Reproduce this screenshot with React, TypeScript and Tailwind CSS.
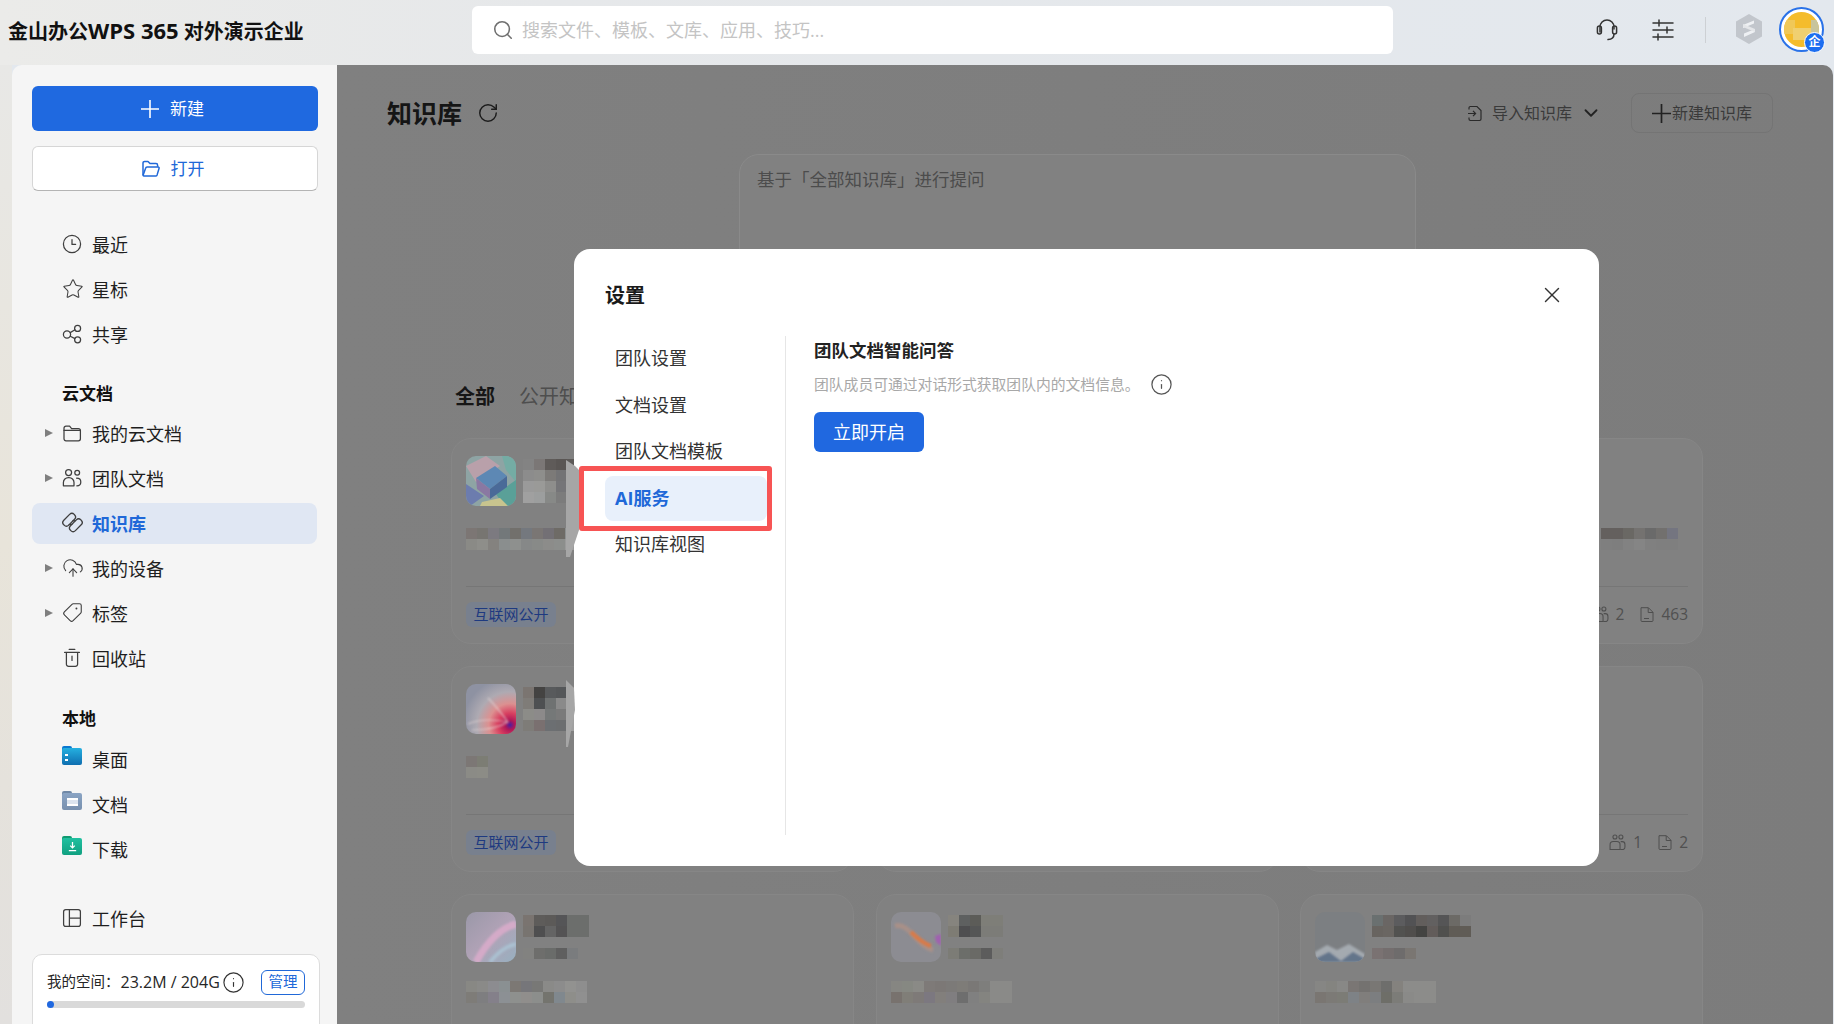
import React from 'react';
import { ChevronDown, CloudUpload, Info, RotateCw, Search, Star, Tag, X } from 'lucide-react';

const ink = '#3f3f3f';

const Ic: React.FC<{ children: React.ReactNode; className?: string; color?: string }> = ({ children, className = 'w-[20px] h-[20px]', color = ink }) => (
  <svg viewBox="0 0 20 20" fill="none" stroke={color} strokeWidth="1.25" strokeLinecap="round" strokeLinejoin="round" className={className}>
    {children}
  </svg>
);

const ClockIcon = () => (
  <Ic>
    <circle cx="10" cy="10" r="8.6" />
    <path d="M10 5.6V10.4H13.6" />
  </Ic>
);
const ShareIcon = () => (
  <Ic>
    <circle cx="5" cy="10.4" r="3.6" />
    <circle cx="15.6" cy="4.4" r="3" />
    <circle cx="15.6" cy="15.8" r="3" />
    <path d="M8.2 8.6L13 5.8M8.2 12.2L13 14.6" />
  </Ic>
);
const FolderIcon = () => (
  <Ic>
    <path d="M2 5.2a2 2 0 0 1 2-2h3.6l2 2.4h6.8a2 2 0 0 1 2 2v8.2a2 2 0 0 1-2 2H4a2 2 0 0 1-2-2V5.2Z" />
    <path d="M2 7.4H18" />
  </Ic>
);
const TeamIcon = () => (
  <Ic>
    <circle cx="6.6" cy="4.6" r="3" />
    <circle cx="15.2" cy="4.8" r="2.4" />
    <path d="M1.4 17.8v-3.2a5 5 0 0 1 5-5h.6a5 5 0 0 1 5 5v3.2Z" />
    <path d="M14.6 10.2c2.4 0 4.2 1.6 4.2 3.8 0 2.2-1.6 3.8-4 3.8" />
  </Ic>
);
const KnowledgeIcon = () => (
  <Ic className="w-[21px] h-[21px]">
    <g transform="rotate(-45 10 10)">
      <rect x="2.6" y="2.6" width="14" height="6.6" rx="3.1" />
      <rect x="3.4" y="10.8" width="14" height="6.6" rx="3.1" />
      <path d="M6.4 9.2L8.4 10.8M11.4 9.2L13.4 10.8" />
    </g>
  </Ic>
);
const TrashIcon = () => (
  <Ic>
    <path d="M2.6 4.4H17.4M7.2 1.4H12.8" />
    <path d="M4.4 4.6V16.2a2.2 2.2 0 0 0 2.2 2.2h6.8a2.2 2.2 0 0 0 2.2-2.2V4.6" />
    <path d="M10 8V12.4" />
  </Ic>
);
const BoardIcon = () => (
  <Ic>
    <rect x="1.6" y="1.6" width="16.8" height="16.8" rx="2.2" />
    <path d="M7.4 1.8V18.2M7.4 10H18.2" />
  </Ic>
);

const LocalFolder: React.FC<{ from: string; to: string; tab: string; children: React.ReactNode }> = ({ from, to, tab, children }) => (
  <span className="relative block w-[20px] h-[19px] -translate-y-[3px]">
    <span className="absolute left-0 top-0 w-[10px] h-[6px] rounded-t-[2px]" style={{ background: tab }} />
    <span className="absolute left-0 right-0 top-[2px] bottom-0 rounded-[2px] flex items-center justify-center" style={{ background: `linear-gradient(180deg, ${from}, ${to})` }}>
      {children}
    </span>
  </span>
);

const Arrow = () => <span className="w-0 h-0 border-y-[4.5px] border-y-transparent border-l-[8px] border-l-[#7f7f7f] -translate-y-[1px]" />;

const NavRow: React.FC<{ icon: React.ReactNode; label: string; arrow?: boolean; active?: boolean }> = ({ icon, label, arrow, active }) => (
  <div className="h-[45px] flex items-center">
    <div className={`w-[285px] h-[41px] flex items-center rounded-[8px] pl-[13px] ${active ? 'bg-[#e0e7f3]' : ''}`}>
      <span className="w-[17px] flex items-center">{arrow && <Arrow />}</span>
      <span className="w-[30px] flex items-center -translate-y-[1px]">{icon}</span>
      <span className={`text-[18px] leading-[24px] ${active ? 'font-bold text-[#2068d8]' : 'text-[#1e1e1e]'}`}>{label}</span>
    </div>
  </div>
);

const Heading: React.FC<{ label: string; className?: string }> = ({ label, className = '' }) => (
  <div className={`h-[38px] flex items-center pl-[30px] text-[17px] font-bold text-[#111] ${className}`}>{label}</div>
);

const PlusMark: React.FC<{ color: string; size: number }> = ({ color, size }) => (
  <svg viewBox="0 0 18 18" fill="none" stroke={color} strokeWidth="1.6" className="shrink-0" style={{ width: size, height: size }}>
    <path d="M9 0V18M0 9H18" />
  </svg>
);

const Sidebar = () => (
  <aside className="w-[325px] shrink-0 bg-[#f5f5f5] rounded-tl-[10px] pl-[20px] pt-[21px] overflow-hidden">
    <button className="w-[286px] h-[45px] rounded-[6px] bg-[#1f69e0] text-white flex items-center justify-center gap-[11px] pr-[5px] text-[17px]">
      <PlusMark color="#fff" size={18} />
      新建
    </button>
    <button className="w-[286px] h-[45px] mt-[15px] rounded-[6px] bg-white border border-[#d6d6d6] border-b-[#b4b4b4] text-[#2068d8] flex items-center justify-center gap-[10px] pr-[5px] text-[17px]">
      <svg viewBox="0 0 20 20" fill="none" stroke="#2068d8" strokeWidth="1.5" strokeLinejoin="round" className="w-[20px] h-[20px]">
        <path d="M2 16V4a1.6 1.6 0 0 1 1.6-1.6H7L9 4.6h6a1.6 1.6 0 0 1 1.6 1.6v1.6" />
        <path d="M2 16.4l2.6-7.2a1.6 1.6 0 0 1 1.5-1.2h11a1 1 0 0 1 1 1.3l-2 6.6a1.6 1.6 0 0 1-1.5 1.1H3.2A1.2 1.2 0 0 1 2 16.4Z" />
      </svg>
      打开
    </button>

    <div className="mt-[31px]">
      <NavRow icon={<ClockIcon />} label="最近" />
      <NavRow icon={<Star size={22} strokeWidth={1.15} color={ink} />} label="星标" />
      <NavRow icon={<ShareIcon />} label="共享" />
    </div>

    <Heading label="云文档" className="mt-[16px] pt-[3px]" />
    <NavRow arrow icon={<FolderIcon />} label="我的云文档" />
    <NavRow arrow icon={<TeamIcon />} label="团队文档" />
    <NavRow active icon={<KnowledgeIcon />} label="知识库" />
    <NavRow arrow icon={<CloudUpload size={22} strokeWidth={1.2} color={ink} />} label="我的设备" />
    <NavRow arrow icon={<Tag size={21} strokeWidth={1.25} color={ink} className="rotate-90" />} label="标签" />
    <NavRow icon={<TrashIcon />} label="回收站" />

    <Heading label="本地" className="mt-[18px] pt-[2px]" />
    <NavRow
      icon={
        <LocalFolder from="#25b0e0" to="#0f6eb0" tab="#0a78d0">
          <span className="absolute left-[3px] top-[6px] w-[3px] h-[7px] border-y-[2.5px] border-white" />
        </LocalFolder>
      }
      label="桌面"
    />
    <NavRow
      icon={
        <LocalFolder from="#8aa4c4" to="#7890ae" tab="#6f88a6">
          <span className="w-[11px] h-[8px] border-y-[2px] border-white bg-[#dce4ee]" />
        </LocalFolder>
      }
      label="文档"
    />
    <NavRow
      icon={
        <LocalFolder from="#20c0a0" to="#10a080" tab="#0f9a70">
          <svg viewBox="0 0 12 12" className="w-[11px] h-[11px]" fill="none" stroke="#fff" strokeWidth="1.4">
            <path d="M6 1V7M3.5 5L6 7.5 8.5 5M2 10.5H10" />
          </svg>
        </LocalFolder>
      }
      label="下载"
    />
    <div className="mt-[24px]">
      <NavRow icon={<BoardIcon />} label="工作台" />
    </div>

    <div className="w-[288px] h-[120px] mt-[13px] rounded-t-[10px] bg-white border border-[#dcdcdc] px-[14px] pt-[14px]">
      <div className="h-[26px] flex items-center text-[#262626]">
        <span className="text-[14.5px]">我的空间：</span>
        <span className="text-[16px] ml-[1px]">23.2M / 204G</span>
        <Info size={23} strokeWidth={1.2} color="#333" className="ml-[2px]" />
        <span className="ml-auto w-[44px] h-[25px] rounded-[6px] border border-[#2068d8] text-[#2068d8] text-[14.5px] flex items-center justify-center">管理</span>
      </div>
      <div className="mt-[6px] w-[258px] h-[7px] rounded-full bg-[#d9d9d9]">
        <div className="h-full rounded-full bg-[#2068e0]" style={{ width: '7px' }} />
      </div>
    </div>
  </aside>
);

const Mosaic: React.FC<{ rows: string[][]; className?: string }> = ({ rows, className = '' }) => (
  <div className={className}>
    {rows.map((row, i) => (
      <div key={i} className="flex">
        {row.map((c, j) => (
          <div key={j} className="w-[11px] h-[11px]" style={{ backgroundColor: c }} />
        ))}
      </div>
    ))}
  </div>
);

const Thumb: React.FC<{ children: React.ReactNode }> = ({ children }) => (
  <svg viewBox="0 0 50 50" className="w-[50px] h-[50px] rounded-[10px] shrink-0">
    <defs>
      <filter id="soft" x="-20%" y="-20%" width="140%" height="140%">
        <feGaussianBlur stdDeviation="1.2" />
      </filter>
    </defs>
    {children}
  </svg>
);

const CubeThumb = () => (
  <Thumb>
    <rect width="50" height="50" fill="#8ea4a4" />
    <polygon points="0,10 20,0 34,10 10,26" fill="#b9a0aa" />
    <polygon points="36,0 50,0 50,26 40,14" fill="#74aca4" />
    <polygon points="0,28 18,40 4,50 0,50" fill="#6c7cae" />
    <polygon points="30,38 50,24 50,50 38,50" fill="#5aa098" />
    <polygon points="16,46 34,42 42,50 14,50" fill="#c8c48e" />
    <polygon points="10,22 29,10 41,20 24,33" fill="#5d88b4" />
    <polygon points="10,22 24,33 24,43 11,33" fill="#8a78a2" />
    <polygon points="24,33 41,20 41,31 24,43" fill="#4a6a98" />
  </Thumb>
);
const PetalThumb = () => (
  <Thumb>
    <defs>
      <radialGradient id="pet" cx="0.88" cy="0.82" r="0.95">
        <stop offset="0" stopColor="#4a20a0" />
        <stop offset="0.1" stopColor="#b01858" />
        <stop offset="0.25" stopColor="#d84060" />
        <stop offset="0.45" stopColor="#dc9090" />
        <stop offset="0.7" stopColor="#aeaab2" />
        <stop offset="1" stopColor="#8e92a2" />
      </radialGradient>
    </defs>
    <rect width="50" height="50" fill="url(#pet)" />
    <path d="M2 40C16 34 30 36 42 38M6 46C20 46 32 44 42 38M22 14C30 22 36 30 42 38" stroke="#e8dcdc" strokeWidth="1.2" fill="none" opacity="0.7" filter="url(#soft)" />
  </Thumb>
);
const SwirlThumb = () => (
  <Thumb>
    <defs>
      <linearGradient id="sw" x1="0" y1="0" x2="1" y2="1">
        <stop offset="0" stopColor="#9a98a8" />
        <stop offset="0.5" stopColor="#b0a2b6" />
        <stop offset="1" stopColor="#98b0c0" />
      </linearGradient>
    </defs>
    <rect width="50" height="50" fill="url(#sw)" />
    <path d="M10 50C20 32 34 16 50 12" stroke="#d4aac8" strokeWidth="7" fill="none" filter="url(#soft)" />
    <path d="M24 50C32 40 40 34 50 32" stroke="#aac0d0" strokeWidth="4" fill="none" filter="url(#soft)" />
  </Thumb>
);
const OrangeThumb = () => (
  <Thumb>
    <rect width="50" height="50" fill="#8c8c92" />
    <path d="M4 14C18 10 26 34 42 38" stroke="#a89088" strokeWidth="5" fill="none" filter="url(#soft)" />
    <path d="M20 20C28 28 34 32 40 34" stroke="#d87a48" strokeWidth="4" fill="none" filter="url(#soft)" />
    <path d="M44 24L50 22V34L45 30Z" fill="#a060b0" filter="url(#soft)" />
  </Thumb>
);
const MountainThumb = () => (
  <Thumb>
    <rect width="50" height="50" fill="#7c7f82" />
    <polygon points="0,40 12,33 22,38 34,32 50,42 50,50 0,50" fill="#a4aab0" filter="url(#soft)" />
    <polygon points="0,47 14,40 26,49 38,40 50,47 50,50 0,50" fill="#64748a" filter="url(#soft)" />
  </Thumb>
);

const PeopleIcon = () => (
  <svg viewBox="0 0 16 16" fill="none" stroke="#4e4e4e" strokeWidth="1" className="w-[17px] h-[17px]">
    <circle cx="5.6" cy="2.8" r="1.9" />
    <circle cx="11.2" cy="2.8" r="1.9" />
    <path d="M1 14.6V10a3 3 0 0 1 3-3h3.4a3 3 0 0 1 3 3v4.6Z" />
    <path d="M11 7.2h1.4a2.6 2.6 0 0 1 2.6 2.6v2.4a2.4 2.4 0 0 1-2.4 2.4h-2" />
  </svg>
);
const DocIcon = () => (
  <svg viewBox="0 0 16 16" fill="none" stroke="#4e4e4e" strokeWidth="1" className="w-[16px] h-[17px]">
    <path d="M2 1.2h7.4L14 5.8V14a1 1 0 0 1-1 1H3a1 1 0 0 1-1-1V1.2Z" />
    <path d="M9.2 1.4V6H14M5 12H10" />
  </svg>
);

const Card: React.FC<{
  thumb: React.ReactNode;
  title: string[][];
  sub?: string[][];
  text: string[][];
  textClass?: string;
  foot?: { people: string; docs: string };
}> = ({ thumb, title, sub, text, textClass = '', foot }) => (
  <div className="h-[206px] rounded-[20px] border border-[#868686] bg-[#818181] px-[14px] pt-[17px]">
    <div className="h-[51px] flex">
      {thumb}
      <div className="ml-[7px] pt-[3px]">
        <Mosaic rows={title} />
        {sub && <Mosaic rows={sub} className="mt-[11px]" />}
      </div>
    </div>
    <Mosaic rows={text} className={`mt-[21px] h-[33px] ${textClass}`} />
    {foot !== undefined && (
      <div className="mt-[25px] border-t border-[#767676] pt-[15px] flex items-center justify-between">
        <span className="w-[90px] h-[25px] rounded-[6px] bg-[#78808e] text-[#1e3a80] text-[15px] flex items-center justify-center">互联网公开</span>
        <span className="flex items-center text-[15.5px] text-[#505050]">
          <PeopleIcon />
          <span className="ml-[7px] mr-[15px]">{foot.people}</span>
          <DocIcon />
          <span className="ml-[6px]">{foot.docs}</span>
        </span>
      </div>
    )}
  </div>
);

const t1 = [
  ['#838383', '#7b7776', '#5f5b59', '#5a5654', '#5d5a58'],
  ['#8c8c8c', '#8e8e8c', '#7c7a78', '#737375', '#7f7d7b'],
  ['#9a9a9a', '#9a9a98', '#8e8e8c', '#757578', '#7e7c78'],
  ['#a0a0a0', '#9c9e9e', '#878987', '#7c7c7c', '#807e7a'],
];
const x1 = [
  ['#7c7674', '#777571', '#7c7a80', '#73787a', '#72706c', '#74787e', '#7a7674', '#737075', '#6e6b66', '#8c9090'],
  ['#8a8a86', '#8e8e8a', '#84827f', '#8a8e8e', '#8e908e', '#868888', '#888a88', '#8c8c8a', '#8c8e8c', '#9a9a9a'],
];
const t2 = [
  ['#7b7571', '#444342', '#585a5c', '#555759', '#8f8680'],
  ['#7f7c78', '#4e5052', '#6f7272', '#8a8a8a', '#8a8a8a'],
  ['#8c8c88', '#8c8a8a', '#757878', '#7a7a7a', '#a0a0a0'],
  ['#7e7c78', '#7a7070', '#6c6f72', '#6c6e70', '#a0a0a0'],
];
const x2 = [
  ['#7c7775', '#7c7d74'],
  ['#8b8b86', '#8c8c86'],
];
const t3 = [
  ['#7a7470', '#5e5c5a', '#5c5a58', '#555557', '#6c6e6c', '#6c6e6c'],
  ['#787470', '#4f4f50', '#646464', '#545354', '#6c6e6c', '#6c6e6c'],
];
const s3 = [['#828280', '#6e6e6c', '#6a6c6a', '#5f5f5f', '#7a7c7e']];
const x3 = [
  ['#888884', '#8a8a88', '#8c8c90', '#8a9092', '#7c7874', '#76767a', '#787876', '#8a8a88', '#8c8c8c', '#929290', '#8e8e8e'],
  ['#7e7c78', '#7e7e80', '#84808a', '#8c9094', '#8e908e', '#908e8c', '#8c8e8c', '#74746e', '#80888e', '#8e8e8a', '#909090'],
];
const t4 = [
  ['#86847e', '#5e6060', '#5c5c58', '#7e7e78', '#7e7e78'],
  ['#7e7c74', '#4e4e50', '#555656', '#7c7c78', '#7c7c78'],
];
const s4 = [['#7c7c76', '#6c6e6a', '#6a6a66', '#5c5c5c', '#7e7e7a']];
const x4 = [
  ['#868682', '#868882', '#8a8a86', '#7e7a78', '#7c7876', '#7c7a78', '#7e7c78', '#7a7876', '#7e7e7c', '#8a8a88', '#8a8a88'],
  ['#78726e', '#807e78', '#7e7a78', '#7c7880', '#827f7c', '#807e80', '#6e6e6e', '#808080', '#848480', '#8a8a88', '#8a8a88'],
];
const t5 = [
  ['#6a7070', '#6a6664', '#5c5c5e', '#525254', '#625e5c', '#626060', '#555556', '#6c6a66', '#7c7c7c'],
  ['#686460', '#6a6662', '#525250', '#504e4c', '#444442', '#625c5a', '#50504e', '#605c56', '#605c56'],
];
const s5 = [['#7a7272', '#746e6e', '#6e6c6c', '#7a7672']];
const x5 = [
  ['#868684', '#848480', '#888886', '#7a7674', '#747270', '#797774', '#6e6e6c', '#84827e', '#8c8c8a', '#8c8c8a', '#8c8c8a'],
  ['#7a7672', '#7c7a76', '#7c7c76', '#7e8286', '#807e7c', '#7c7e80', '#6e6e68', '#7c7c78', '#8a8a88', '#8c8c8a', '#8c8c8a'],
];
const x6 = [
  ['#64605e', '#64605e', '#6a6864', '#747270', '#6a6a6a', '#72706e', '#747580'],
  ['#7f7f7f', '#7e7e7e', '#828282', '#858585', '#808080', '#7f7f7f', '#7f7f7f'],
];
const empty: string[][] = [];

const Main = () => (
  <main className="relative flex-1 rounded-tr-[10px] bg-[linear-gradient(90deg,#808080,#7c7c7c)] pl-[114px] overflow-hidden">
    <div className="h-[68px] pt-[28px] flex items-center -ml-[64px] mr-[60px]">
      <h1 className="text-[25px] leading-[34px] font-bold text-[#151515]">知识库</h1>
      <RotateCw size={22} strokeWidth={1.6} color="#1c1c1c" className="ml-[15px]" />
      <div className="ml-auto flex items-center text-[16px] text-[#3a3a3a]">
        <svg viewBox="0 0 16 16" fill="none" stroke="#2a2a2a" strokeWidth="1.2" className="w-[16px] h-[17px] mr-[9px]">
          <path d="M2 4V2.4A1.4 1.4 0 0 1 3.4 1H10l4 4v8.6a1.4 1.4 0 0 1-1.4 1.4H3.4A1.4 1.4 0 0 1 2 13.6V12M1 8H8.5M6 5.4L8.6 8 6 10.6" />
        </svg>
        导入知识库
        <ChevronDown size={22} strokeWidth={2} color="#222" className="ml-[8px]" />
        <span className="ml-[29px] w-[142px] h-[40px] rounded-[8px] border border-[#747474] flex items-center justify-center gap-[1px]">
          <PlusMark color="#222" size={19} />
          新建知识库
        </span>
      </div>
    </div>

    <div className="h-[201px] w-[677px] ml-[288px] mt-[21px] rounded-[20px] border border-[#8a8a8a] bg-[#818181] px-[17px] pt-[10px] text-[17.5px] leading-[28px] text-[#4c4c4c]">
      基于「全部知识库」进行提问
    </div>

    <div className="mt-[23px] h-[38px] flex items-center pl-[4px]">
      <span className="text-[20px] font-bold text-[#161616]">全部</span>
      <span className="ml-[24px] text-[20px] text-[#4e4e4e]">公开知识库</span>
    </div>

    <div className="mt-[22px] w-[1252px] grid grid-cols-[403px_403px_403px] gap-x-[21.5px] gap-y-[22px]">
      <Card thumb={<CubeThumb />} title={t1} text={x1} foot={{ people: '', docs: '' }} />
      <Card thumb={<span />} title={empty} text={empty} foot={{ people: '', docs: '' }} />
      <Card thumb={<span />} title={empty} text={x6} textClass="pl-[286px]" foot={{ people: '2', docs: '463' }} />
      <Card thumb={<PetalThumb />} title={t2} text={x2} foot={{ people: '', docs: '' }} />
      <Card thumb={<span />} title={empty} text={empty} foot={{ people: '', docs: '' }} />
      <Card thumb={<span />} title={empty} text={empty} foot={{ people: '1', docs: '2' }} />
      <Card thumb={<SwirlThumb />} title={t3} sub={s3} text={x3} textClass="-translate-y-[3px]" />
      <Card thumb={<OrangeThumb />} title={t4} sub={s4} text={x4} textClass="-translate-y-[3px]" />
      <Card thumb={<MountainThumb />} title={t5} sub={s5} text={x5} textClass="-translate-y-[3px]" />
    </div>
  </main>
);

const menu = ['团队设置', '文档设置', '团队文档模板', 'AI服务', '知识库视图'];

const SettingsDialog = () => (
  <div className="absolute left-[574px] top-[249px] w-[1025px] h-[617px] rounded-[16px] bg-white pl-[31px] pt-[33px]">
    <h2 className="text-[20px] leading-[28px] font-bold text-[#1a1a1a]">设置</h2>
    <button className="absolute right-[34px] top-[33px] text-[#333]">
      <X size={26} strokeWidth={1.3} />
    </button>
    <div className="mt-[26px] flex">
      <div className="w-[181px] h-[499px] border-r border-[#e6e6e6] pr-[18px] flex flex-col gap-[1.5px]">
        {menu.map((m) => (
          <div
            key={m}
            className={`h-[45px] shrink-0 flex items-center px-[10px] rounded-[8px] text-[18px] ${m === 'AI服务' ? 'bg-[#e8f0fb] text-[#2068d8] font-bold' : 'text-[#333]'}`}
          >
            {m}
          </div>
        ))}
      </div>
      <div className="pl-[28px] pt-[2px]">
        <div className="text-[17.5px] leading-[24px] font-bold text-[#222]">团队文档智能问答</div>
        <div className="mt-[11px] h-[22px] flex items-center text-[14.8px] text-[#a8a8a8]">
          团队成员可通过对话形式获取团队内的文档信息。
          <Info size={23} strokeWidth={1.3} color="#555" className="ml-[10px]" />
        </div>
        <button className="mt-[17px] w-[110px] h-[40px] rounded-[6px] bg-[#2068e0] text-white text-[18px]">立即开启</button>
      </div>
    </div>

    <div className="absolute left-[5px] top-[217px] w-[193px] h-[65px] border-[5px] border-[#f75454] rounded-[3px]" />
    {/* 截图上残留的浅色边 */}
    <svg viewBox="0 0 13 97" className="absolute -left-[8px] top-[211px] w-[13px] h-[97px]">
      <polygon points="0,0 9,6 13,10 13,70 4,97 0,97" fill="#a6a6a6" />
    </svg>
    <svg viewBox="0 0 9 67" className="absolute -left-[8px] top-[431px] w-[9px] h-[67px]">
      <polygon points="0,0 8,8 9,30 2,67 0,67" fill="#a6a6a6" />
    </svg>
  </div>
);

const TopBar = () => (
  <header className="h-[65px] shrink-0 relative flex items-center bg-[linear-gradient(90deg,#ebebe9,#e6e8ea_30%,#e3e8ee)]">
    <div className="w-[472px] pl-[8px] -mt-[4px] text-[20px] font-bold text-[#111] whitespace-nowrap">
      金山办公<span className="text-[22px]">WPS 365</span> 对外演示企业
    </div>
    <div className="w-[921px] h-[48px] -mt-[5px] rounded-[6px] bg-white flex items-center pl-[20px]">
      <Search size={22} strokeWidth={1.7} color="#6f6f6f" />
      <span className="ml-[8px] text-[18px] text-[#c4c4c4]">搜索文件、模板、文库、应用、技巧...</span>
    </div>
    <svg viewBox="0 0 24 24" fill="none" stroke="#333" strokeWidth="1.5" strokeLinecap="round" className="ml-[202px] w-[24px] h-[24px] -mt-[5px]">
      <path d="M5 14V9a7 7 0 0 1 14 0v2" />
      <rect x="2.4" y="8" width="4" height="8" rx="2" />
      <rect x="17.6" y="8" width="4" height="8" rx="2" />
      <path d="M19 16c0 3.4-2.6 5.4-6 5.6" />
    </svg>
    <svg viewBox="0 0 24 24" fill="none" stroke="#333" strokeWidth="1.5" strokeLinecap="round" className="ml-[32px] w-[24px] h-[24px] -mt-[5px]">
      <path d="M2 5H22M2 12H22M2 19H22M8 2V8M16 9V15M7 16V22" />
    </svg>
    <span className="ml-[30px] w-px h-[26px] bg-[#cdd0d4] -mt-[5px]" />
    <svg viewBox="0 0 28 30" className="ml-[29px] w-[28px] h-[30px] -mt-[7px]">
      <polygon points="14,0 27,7.5 27,22.5 14,30 1,22.5 1,7.5" fill="#c2c6cc" />
      <path d="M8 11L19 6.5V9.5L8 14ZM9 19.5L20 15V18L9 23Z" fill="#eef0f3" />
      <path d="M8 13L20 18V15L8 10Z" fill="#e4e6e9" />
    </svg>
    <div className="relative ml-[16px] w-[45px] h-[45px] -mt-[7px] rounded-full border-2 border-[#2a72e8] p-[3px] bg-white">
      <div className="w-full h-full rounded-full bg-[#f4bc2c] overflow-hidden relative">
        <div className="absolute left-0 top-[8px] w-[11px] h-[14px] bg-[#f0c858]" />
        <div className="absolute left-[9px] top-[16px] w-[22px] h-[12px] bg-[#f0d070]" />
        <div className="absolute right-0 top-[8px] w-[8px] h-[18px] bg-[#c8c49c]" />
        <div className="absolute right-0 top-[26px] w-[14px] h-[6px] bg-[#a0a8b0]" />
      </div>
      <span className="absolute -right-[3px] -bottom-[3px] w-[21px] h-[21px] rounded-full bg-[#1c6ef0] border border-white text-white text-[12px] leading-none font-bold flex items-center justify-center">企</span>
    </div>
  </header>
);

export default function App() {
  return (
    <div className="relative w-[1834px] h-[1024px] overflow-hidden flex flex-col bg-[#e3e8ee] font-['Open_Sans','Noto_Sans_CJK_SC',sans-serif]">
      <TopBar />
      <div className="flex-1 min-h-0 flex pr-px">
        <div className="w-[12px] shrink-0 bg-[linear-gradient(180deg,#e8e8e6,#e8e4da_50%,#e2e0de)]" />
        <Sidebar />
        <Main />
      </div>
      <SettingsDialog />
    </div>
  );
}
